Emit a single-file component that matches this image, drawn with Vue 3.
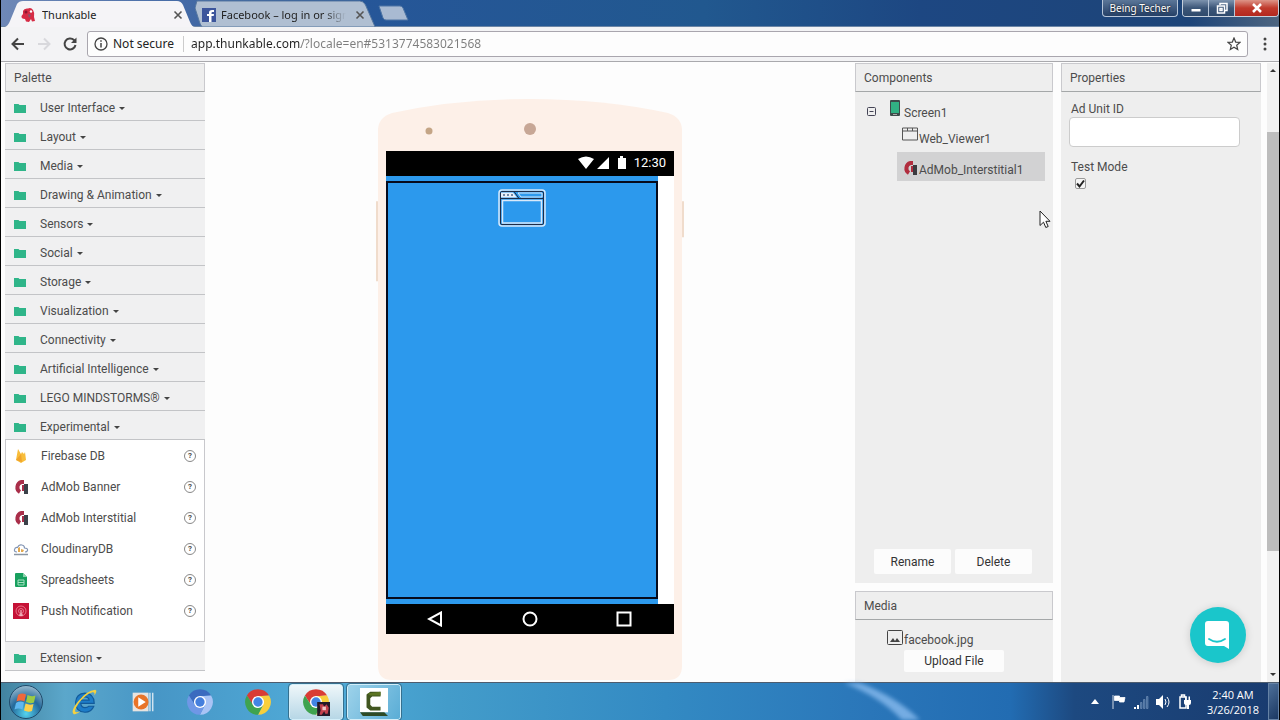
<script setup>
import { ref } from 'vue'

const categories = [
  'User Interface', 'Layout', 'Media', 'Drawing & Animation', 'Sensors', 'Social',
  'Storage', 'Visualization', 'Connectivity', 'Artificial Intelligence',
  'LEGO MINDSTORMS®', 'Experimental'
]
const items = [
  { name: 'Firebase DB', icon: 'firebase' },
  { name: 'AdMob Banner', icon: 'admob' },
  { name: 'AdMob Interstitial', icon: 'admob' },
  { name: 'CloudinaryDB', icon: 'cloud' },
  { name: 'Spreadsheets', icon: 'sheet' },
  { name: 'Push Notification', icon: 'push' }
]
const chromium = ['#3b6bbf', '#a9c3f5', '#6f97e6']
const chrome = ['#d93c35', '#f8cf3c', '#3fa34f']
const url = ref('app.thunkable.com/?locale=en#5313774583021568')
const adUnit = ref('')
const testMode = ref(true)
</script>

<template>
  <div class="window">
    <header class="titlebar">
      <div class="tab active">
        <svg class="tab-shape" viewBox="0 0 190 27" preserveAspectRatio="none"><path d="M0 27 Q3 26 5 21 L12 4 Q14 1 18 1 H172 Q176 1 178 5 L185 22 Q187 27 190 27Z" fill="#f5f4f7" /></svg>
        <svg class="fav" viewBox="0 0 16 16"><path d="M3 4Q4 1 8 1.500Q11 0 13 3Q15 6 14 10L15 14L12 14.500L11 12L9 15L6 14.500L5 12Q1 12 1.500 9L3 7Z" fill="#d62b45" /><circle cx="6" cy="5" r="1.500" fill="#8b1730" /><path d="M8 7l3 1-2 3z" fill="#7f5670" /><circle cx="11" cy="4.500" r="1.200" fill="#fff" /></svg>
        <button class="tab-title">Thunkable</button>
        <button class="close" aria-label="Close Thunkable"><svg viewBox="0 0 10 10"><path d="M1.500 1.500l7 7M8.500 1.500l-7 7" /></svg></button>
      </div>
      <div class="tab second">
        <svg class="tab-shape" viewBox="0 0 190 27" preserveAspectRatio="none"><path d="M2 1H172Q176 1 178 5L188 27H8Q6 26 5 23L0 8Z" fill="#b0bfd2" stroke="#56779f" /></svg>
        <svg class="fav" viewBox="0 0 16 16"><rect x="1" y="1" width="14" height="14" fill="#3c559c" /><path d="M8 15V9H6V7h2V5.500Q8 3 11 3h2v2h-1.500Q10.500 5 10.500 6v1H13l-.3 2h-2.200v6z" fill="#fff" /></svg>
        <button class="tab-title faded">Facebook – log in or sign</button>
        <button class="close" aria-label="Close Facebook"><svg viewBox="0 0 10 10"><path d="M1.500 1.500l7 7M8.500 1.500l-7 7" /></svg></button>
      </div>
      <button class="newtab" aria-label="New tab"><svg viewBox="0 0 32 16"><path d="M2 1H23Q25 1 26 3L31 15H9Q7 15 6 13Z" fill="#a9bad2" stroke="#4e75a5" /></svg></button>
      <div class="grow"></div>
      <button class="user">Being Techer</button>
      <div class="controls">
        <button aria-label="Minimize"><svg viewBox="0 0 12 12"><path d="M1.500 7h9v2.500h-9z" fill="#fff" /></svg></button>
        <button aria-label="Restore"><svg viewBox="0 0 12 12" fill="none" stroke="#fff" stroke-width="1.500"><path d="M4 3V1.500h7v7H9M1.500 4h7v7h-7zM4 6.500h2v2H4z" /></svg></button>
        <button class="x" aria-label="Close"><svg viewBox="0 0 12 12"><path d="M2 2l8 8M10 2l-8 8" stroke="#fff" stroke-width="2.500" /></svg></button>
      </div>
    </header>

    <nav class="toolbar">
      <button class="nav" aria-label="Back"><svg viewBox="0 0 16 16"><path d="M14 8H3M8 2.500L2.500 8 8 13.500" stroke="#444" /></svg></button>
      <button class="nav" aria-label="Forward"><svg viewBox="0 0 16 16"><path d="M2 8h11M8 2.500L13.500 8 8 13.500" stroke="#d8d8dc" /></svg></button>
      <button class="nav" aria-label="Reload"><svg viewBox="0 0 16 16"><path d="M13.500 9A5.500 5.500 0 1 1 12 4L13 5.500" stroke="#444" /><path d="M14.500 1.500v5.500H9z" fill="#444" /></svg></button>
      <div class="address">
        <button class="secure"><svg viewBox="0 0 14 14"><circle cx="7" cy="7" r="6" fill="none" stroke="#444" stroke-width="1.300" /><path d="M7 6v4.500M7 3.300v1.500" stroke="#444" stroke-width="1.500" /></svg>Not secure</button>
        <input class="url" v-model="url" aria-label="Address" />
        <button class="star" aria-label="Bookmark"><svg viewBox="0 0 14 14"><path d="M7 1l1.700 4.100 4.300.3-3.300 2.800 1 4.300L7 10.200 3.300 12.500l1-4.300L1 5.400l4.300-.3z" fill="none" stroke="#444" stroke-width="1.200" /></svg></button>
      </div>
      <button class="menu" aria-label="Menu"><svg viewBox="0 0 4 14"><circle cx="2" cy="2" r="1.500" /><circle cx="2" cy="7" r="1.500" /><circle cx="2" cy="12" r="1.500" /></svg></button>
    </nav>

    <main class="page">
      <aside class="palette">
        <h2 class="heading">Palette</h2>
        <button v-for="c in categories" :key="c" class="category">
          <svg class="folder" viewBox="0 0 12 10"><path d="M0 1h4.500l1 1H12v8H0z" /></svg>{{ c }}<i class="caret"></i>
        </button>
        <ul class="items">
          <li v-for="i in items" :key="i.name">
            <svg class="item-icon" viewBox="0 0 16 16">
              <template v-if="i.icon === 'firebase'"><path d="M3 12L5 1l3 5 1-2 2 2 1-2 1 8-5 3z" fill="#f8bd3a" /><path d="M3 12L8 6l1 8z" fill="#f0a32b" /></template>
              <template v-else-if="i.icon === 'admob'"><path d="M11 3H8.500A5.500 5.500 0 0 0 7 13" fill="none" stroke="#a92e49" stroke-width="4" /><path d="M9 6h2v6H9z" fill="#a92e49" /><path d="M11 5h4v10h-4z" fill="#3b4149" /></template>
              <template v-else-if="i.icon === 'cloud'"><path d="M4 11Q1 11 1.500 8.500 2 6 4.500 6.500 6 3 9 4q2.500.5 2.500 3Q15 7 14.500 9.500 14 11 12 11" fill="none" stroke="#8294b3" stroke-width="1.200" /><path d="M5 7l2-1v5H5zM8 8l3 1-1 2H8z" fill="#e2a84f" /><path d="M1 13.500h14" stroke="#8b96a3" stroke-width="1.500" /></template>
              <template v-else-if="i.icon === 'sheet'"><path d="M3 1h7l4 4v9q0 1-1 1H3q-1 0-1-1V2q0-1 1-1z" fill="#18a05e" /><path d="M10 1l4 4h-4z" fill="#8bd2ad" /><path d="M5 8h6v5H5zM5 10.500h6" fill="none" stroke="#a5dfc1" /></template>
              <template v-else><path d="M0 0h16v16H0z" fill="#c51236" /><circle cx="8" cy="8" r="5" fill="none" stroke="#f08c9c" stroke-width=".8" /><circle cx="8" cy="8" r="2.500" fill="none" stroke="#f08c9c" stroke-width=".8" /><path d="M8 7v6M6 12h4" stroke="#fbd5db" /></template>
            </svg>
            <span>{{ i.name }}</span>
            <button class="help" :aria-label="'About ' + i.name">?</button>
          </li>
        </ul>
        <button class="category">
          <svg class="folder" viewBox="0 0 12 10"><path d="M0 1h4.500l1 1H12v8H0z" /></svg>Extension<i class="caret"></i>
        </button>
      </aside>

      <section class="viewer">
        <div class="phone">
          <svg class="shell" viewBox="0 0 308 580" preserveAspectRatio="none">
            <path d="M1 102v80M307 102v36" stroke="#f0dccc" stroke-width="3" />
            <path d="M2 30Q3 18 16 14Q80 0 154 0Q228 0 292 14Q305 18 306 30V566Q306 580 292 580H16Q2 580 2 566Z" fill="#fdf0e8" />
            <circle cx="53" cy="32" r="3.500" fill="#c4a586" />
            <circle cx="154" cy="30" r="6" fill="#c7a796" />
          </svg>
          <div class="status">
            <svg viewBox="0 0 52 16"><path d="M1 4Q9-1 17 4L9 14zM20 14L32 2v12zM41 3h2V1h3v2h3v11h-8z" fill="#fff" /></svg>
            <span>12:30</span>
          </div>
          <div class="screen">
            <div class="canvas">
              <div class="webview">
                <svg viewBox="0 0 48 38" fill="none">
                  <rect x="1" y="1" width="46" height="36" rx="3" stroke="#d8e9fa" stroke-width="1.500" />
                  <rect x="2.500" y="2.500" width="43" height="33" rx="1.500" stroke="#1c2c48" />
                  <path d="M3 3.500h12l4 5H3z" fill="#e7eef8" />
                  <path d="M5 6h2M9 6h2M13 6h2" stroke="#51698b" stroke-width="1.500" />
                  <path d="M20 4h24v4H23z" stroke="#d8e9fa" />
                  <path d="M16 2.500l5 7M3 9.500h42" stroke="#1c2c48" />
                  <path d="M4.500 11.500h39v22.500h-39z" stroke="#d8e9fa" stroke-width="1.500" />
                </svg>
              </div>
            </div>
          </div>
          <div class="navbar">
            <svg viewBox="0 0 16 16"><path d="M14 1.500v13L2 8z" /></svg>
            <svg viewBox="0 0 16 16"><circle cx="8" cy="8" r="6.500" /></svg>
            <svg viewBox="0 0 16 16"><path d="M1.500 1.500h13v13h-13z" /></svg>
          </div>
        </div>
      </section>

      <div class="column components">
        <h2 class="heading">Components</h2>
        <section class="panel tree">
          <ul>
            <li class="root"><button class="collapse" aria-label="Collapse"><svg viewBox="0 0 9 9" fill="none" stroke="#445"><rect x=".5" y=".5" width="8" height="8" rx="1" /><path d="M2.500 4.500h4" /></svg></button>
              <svg class="mobile" viewBox="0 0 10 16"><rect width="10" height="16" rx="1" fill="#3e4c4a" /><path d="M1 2h8v11H1z" fill="#31b283" /><path d="M3 14.500h4" stroke="#aaa" /></svg><button class="node">Screen1</button></li>
            <li class="child"><svg class="web" viewBox="0 0 16 14" fill="none" stroke="#555"><path d="M.5.5h15v12H.5zM.5 3.500h15M5.500.5v3M10.500.5v3" /></svg><button class="node">Web_Viewer1</button></li>
            <li class="child selected"><svg class="web" viewBox="0 0 16 16"><path d="M11 3H8.500A5.500 5.500 0 0 0 7 13" fill="none" stroke="#b12d3e" stroke-width="4" /><path d="M9 6h2v6H9z" fill="#b12d3e" /><path d="M11 5h4v10h-4z" fill="#3b3b40" /></svg><button class="node">AdMob_Interstitial1</button></li>
          </ul>
          <div class="actions"><button class="btn">Rename</button><button class="btn">Delete</button></div>
        </section>
        <h2 class="heading">Media</h2>
        <section class="panel media">
          <a class="file" href="#"><svg viewBox="0 0 16 16" fill="none" stroke="#444"><rect x=".5" y=".5" width="15" height="14" rx="1" /><path d="M3 12l3-4 2 3 2-3 3 4z" fill="#444" stroke="none" /></svg>facebook.jpg</a>
          <button class="btn upload">Upload File</button>
        </section>
      </div>

      <div class="column properties">
        <h2 class="heading">Properties</h2>
        <section class="panel props">
          <label for="unit">Ad Unit ID</label>
          <input id="unit" type="text" v-model="adUnit" />
          <label for="test">Test Mode</label>
          <span class="check"><input id="test" type="checkbox" v-model="testMode" /><svg v-if="testMode" viewBox="0 0 11 11"><path d="M2 5.500l2.500 3L9 2.500" fill="none" stroke="#222" stroke-width="2" /></svg></span>
        </section>
      </div>

      <div class="scroll"><i class="up"></i><i class="thumb"></i><i class="down"></i></div>

      <button class="chat" aria-label="Open chat"><svg viewBox="0 0 28 30"><path d="M4 1h18q3 0 3 3v25l-5-3H4q-3 0-3-3V4q0-3 3-3z" fill="#fff" /><path d="M5 19q8 5.500 16 0" fill="none" stroke="#1ac6cb" stroke-width="1.800" stroke-linecap="round" /></svg></button>
      <svg class="cursor" viewBox="0 0 12 19"><path d="M1 1v14.500l3.500-3.300 2.300 5.300 2.400-1-2.300-5.200H11z" fill="#fff" stroke="#222" /></svg>
    </main>

    <footer class="taskbar">
      <svg class="streak" viewBox="0 0 100 38" preserveAspectRatio="none"><path d="M0 0H16Q52 14 76 38H58Q36 14 0 0Z" fill="#8fc0f2" /></svg>
      <button class="start" aria-label="Start">
        <svg viewBox="0 0 36 36"><defs><radialGradient id="orb" cx=".5" cy=".85" r=".9"><stop offset="0" stop-color="#54d3ee" /><stop offset=".5" stop-color="#24699b" /><stop offset="1" stop-color="#a9c5d5" /></radialGradient></defs><circle cx="18" cy="18" r="16.500" fill="url(#orb)" stroke="#1f4b6c" /><path d="M10 11q4-2.500 8-.5l-1.500 7q-4-2-8 0z" fill="#f0683b" /><path d="M19.500 11q4 2 8 .5l-1.500 7q-4 1.500-8-.5z" fill="#9bca45" /><path d="M8 19q4-2.500 8-.5l-1.500 7q-4-2-8 0z" fill="#5fb7f0" /><path d="M17.500 19.500q4 2 8 .5l-1.500 7q-4 1.500-8-.5z" fill="#fbd04b" /></svg>
      </button>
      <button class="task" aria-label="Internet Explorer"><svg viewBox="0 0 30 30"><path d="M26 16.500H11.500Q12 21 16 21q3 0 4-1.500h5.500Q23 26 16 26 6 25.500 6 15.500 6.500 6 16 5.500 26 6 26 16.500zM11.500 13h9Q20 9.500 16 9.500T11.500 13z" fill="#1d7cc8" stroke="#125a9a" stroke-width="1.200" /><path d="M4 28Q0 25 9 14 18 3 27 2q3 1-1 6 1-4-2-3.500Q16 7 9 17 3 26 7 26q2 0 4-1-4 4-7 3z" fill="#f5d13f" /></svg></button>
      <button class="task" aria-label="Media Player"><svg viewBox="0 0 30 30"><path d="M5 5h17v20H5z" fill="#e8e4e0" /><path d="M23.500 5v20M26.500 5v20" stroke="#d5e6f1" stroke-width="1.500" /><circle cx="14" cy="15" r="8" fill="#e87428" /><path d="M11 10l8 5-8 5z" fill="#fff" /></svg></button>
      <button class="task" aria-label="Chromium"><svg viewBox="0 0 24 24"><path v-for="(c, n) in chromium" :key="n" :transform="`rotate(${n * 120} 12 12)`" d="M2.470 6.500A11 11 0 0 1 21.530 6.500L12 7L7.670 14.500Z" :fill="c" /><circle cx="12" cy="12" r="5.200" fill="#fff" /><circle cx="12" cy="12" r="4" fill="#457fdd" /></svg></button>
      <button class="task" aria-label="Chrome"><svg viewBox="0 0 24 24"><path v-for="(c, n) in chrome" :key="n" :transform="`rotate(${n * 120} 12 12)`" d="M2.470 6.500A11 11 0 0 1 21.530 6.500L12 7L7.670 14.500Z" :fill="c" /><circle cx="12" cy="12" r="5.200" fill="#fff" /><circle cx="12" cy="12" r="4" fill="#4285e4" /></svg></button>
      <button class="task open front" aria-label="Thunkable - Chrome"><svg viewBox="0 0 24 24"><path v-for="(c, n) in chrome" :key="n" :transform="`rotate(${n * 120} 12 12)`" d="M2.470 6.500A11 11 0 0 1 21.530 6.500L12 7L7.670 14.500Z" :fill="c" /><circle cx="12" cy="12" r="5.200" fill="#fff" /><circle cx="12" cy="12" r="4" fill="#4285e4" /><path d="M13 12h11v12H13z" fill="#241828" /><path d="M15 14h3l1 2 2-2 2 3-1 5h-2l-1-2-2 3h-2l1-4z" fill="#c4404c" /><path d="M17.500 16h3v3h-3z" fill="#f0c9c8" /></svg></button>
      <button class="task open" aria-label="Camtasia"><svg viewBox="0 0 30 30"><path d="M0 0h30v26H0z" fill="#fff" /><path d="M0 26h26l4 4H3z" fill="#2e4a25" /><path d="M22 4v5h-9l-2 2v7l2 2h9v4H11l-4-3V7l4-3z" fill="#41561f" /><path d="M22 4v4H11L8 6z" fill="#5b7422" /></svg></button>
      <div class="grow"></div>
      <div class="tray">
        <svg class="arrow" viewBox="0 0 8 5"><path d="M0 5l4-5 4 5z" /></svg>
        <svg viewBox="0 0 16 16"><path d="M2 1v14M3.500 2h5v1.500H14L13 8H8.500V6.500h-5z" stroke="#fff" stroke-width=".8" /></svg>
        <svg viewBox="0 0 16 16"><path d="M1 13h2v2H1zM4 11h2v4H4z" /><path d="M7.500 8.500h1.500v6H7.500zM10.500 5.500H12v9h-1.500zM13.500 2.500H15v12h-1.500z" fill="#41699a" stroke="#86a3c5" stroke-width=".5" /></svg>
        <svg viewBox="0 0 16 16"><path d="M1 5h3l4-4v14l-4-4H1z" /><path d="M10 5q2 3 0 6M12 3q4 5 0 10" fill="none" stroke="#fff" /></svg>
        <svg viewBox="0 0 16 16"><path d="M3 3h6v11H3zM4.500 1h3v2h-3z" fill="none" stroke="#fff" stroke-width="1.500" /><path d="M7 6h7v3q0 2-2 2v4h-2v-4q-3 0-3-2zM8 2.500h1.500V6H8zM11.500 2.500H13V6h-1.500z" /></svg>
        <div class="clock"><span>2:40 AM</span><span>3/26/2018</span></div>
      </div>
      <button class="peek" aria-label="Show desktop"></button>
    </footer>
  </div>
</template>

<style>
html, body { margin: 0; background: #000; }
</style>

<style scoped>
* { box-sizing: border-box; }
button, input { font: inherit; color: inherit; margin: 0; padding: 0; border: 0; background: none; }
ul { list-style: none; margin: 0; padding: 0; }
svg { display: block; flex: none; }
.grow { flex: 1; }
.window { height: 100vh; display: flex; flex-direction: column; overflow: hidden; padding: 0 1px; font: 12px/16px Roboto, sans-serif; color: #4c4c4c; }

.titlebar { display: flex; height: 27px; flex: none; padding-left: 4px; background: linear-gradient(90deg, #6f88b7 0, #27569a 24%, #21588f 55%, #1d4782 72%, #1d4478 93%, #4d6580 100%); font: 11px/16px "Noto Sans", sans-serif; color: #222; border-bottom: 1px solid #6c86a6; }
.tab { position: relative; display: flex; align-items: center; height: 27px; width: 190px; flex: none; padding: 2px 11px 0 15px; }
.tab.active { z-index: 1; }
.tab.second { width: 182px; padding: 2px 11px 0 6px; }
.tab-shape { position: absolute; inset: 0; width: 100%; height: 100%; }
.fav { position: relative; width: 16px; height: 16px; margin-right: 6px; }
.second .fav { margin-right: 4px; }
.tab-title { position: relative; flex: 1; min-width: 0; overflow: hidden; white-space: nowrap; text-align: left; }
.faded { -webkit-mask-image: linear-gradient(90deg, #000 82%, transparent); mask-image: linear-gradient(90deg, #000 82%, transparent); }
.close { position: relative; width: 12px; height: 12px; margin-left: 8px; }
.close svg { width: 10px; height: 10px; margin: auto; fill: none; stroke: #555; stroke-width: 1.6px; }
.newtab { align-self: center; width: 32px; height: 16px; }
.user { height: 17px; width: 76px; font-size: 10px; line-height: 15px; color: #fff; text-shadow: 0 0 2px #000; border: 1px solid #b6c5d8; border-top: 0; border-radius: 0 0 4px 4px; background: linear-gradient(#5b7698, #243f66); margin-right: 4px; white-space: nowrap; }
.controls { display: flex; height: 17px; border: 1px solid #c6d0dc; border-top: 0; border-radius: 0 0 4px 4px; overflow: hidden; }
.controls button { width: 26px; border-right: 1px solid #b6c5d8; background: linear-gradient(#7d93ae, #3c5678 50%, #2f4a6c); }
.controls button.x { width: 43px; border: 0; background: linear-gradient(#dd9588, #c03a2c 50%, #b3281f); }
.controls svg { width: 12px; height: 12px; margin: auto; }

.toolbar { display: flex; align-items: center; height: 35px; flex: none; padding: 0 8px; background: #f3f3f5; border-bottom: 1px solid #a9a9ad; font: 12px/16px "Noto Sans", sans-serif; color: #222; }
.nav { width: 18px; height: 18px; margin-right: 8px; }
.nav svg { width: 16px; height: 16px; fill: none; stroke-width: 2px; margin: auto; }
.address { flex: 1; display: flex; align-items: center; height: 26px; border: 1px solid #a9a6ae; border-radius: 3px; background: #fdfdfd; padding: 0 6px; }
.secure { display: flex; align-items: center; gap: 5px; white-space: nowrap; padding-right: 9px; border-right: 1px solid #ccc; }
.secure svg, .star svg { width: 14px; height: 14px; }
.url { flex: 1; min-width: 0; padding-left: 7px; outline: 0; background: linear-gradient(90deg, #222 117px, #7d7d7d 117px); background-clip: text; -webkit-background-clip: text; color: transparent; }
.menu { width: 4px; margin: 0 4px 0 15px; }
.menu svg { width: 4px; height: 14px; fill: #444; }

.page { position: relative; flex: 1; min-height: 0; display: flex; padding: 1px 0 0 4px; background: #fdfdfd; overflow: hidden; }
.heading { margin: 0; flex: none; height: 29px; padding: 0 8px; font: 12px/28px Roboto, sans-serif; background: #eee; border: 1px solid #c9c9cd; border-bottom-color: #a4a7a8; }
.palette { width: 200px; flex: none; }
.category { display: flex; align-items: center; width: 100%; height: 29px; padding: 4px 8px 0 9px; background: #f0f0f1; border-bottom: 1px solid #c3c4c7; text-align: left; }
.folder { width: 12px; height: 10px; fill: #2fb589; margin-right: 14px; }
.caret { border: 3px solid transparent; border-top-color: #444; border-bottom: 0; margin-left: 4px; }
.items { height: 202px; border: 1px solid #c8c8cc; border-top: 0; background: #fff; }
.items li { display: flex; align-items: center; height: 31px; padding: 0 8px 0 7px; }
.item-icon { width: 16px; height: 16px; margin-right: 12px; }
.items span { flex: 1; }
.help { width: 12px; height: 12px; border: 1px solid #888; border-radius: 50%; font-size: 8px; line-height: 10px; font-weight: 700; }

.viewer { flex: 1; display: flex; justify-content: center; padding: 36px 0 2px; }
.phone { position: relative; width: 308px; display: flex; flex-direction: column; padding: 52px 10px 46px; }
.shell { position: absolute; inset: 0; width: 100%; height: 100%; }
.status { position: relative; height: 25px; flex: none; background: #000; color: #fff; font-size: 13px; display: flex; align-items: center; justify-content: flex-end; gap: 5px; padding: 0 8px 2px; }
.status svg { width: 52px; height: 16px; }
.screen { position: relative; flex: 1; display: flex; background: #fff; padding-right: 16px; }
.canvas { flex: 1; display: flex; padding: 5px 0; background: #2c99ed; }
.webview { flex: 1; border: 2px solid #060b1c; display: flex; justify-content: center; padding-top: 6px; }
.webview svg { width: 48px; height: 38px; }
.navbar { position: relative; height: 30px; flex: none; background: #000; display: flex; justify-content: space-between; align-items: center; padding: 0 42px 0 41px; }
.navbar svg { width: 16px; height: 16px; fill: none; stroke: #fff; stroke-width: 2px; }

.column { display: flex; flex-direction: column; flex: none; margin-right: 8px; }
.components { width: 198px; }
.properties { width: 200px; margin-right: 6px; }
.panel { background: #eee; }
.tree { flex: 1; display: flex; flex-direction: column; justify-content: space-between; margin-bottom: 8px; padding: 8px 10px 9px 12px; }
.tree ul { margin-right: -2px; }
.tree li { display: flex; align-items: center; }
.root { height: 23px; }
.collapse { width: 9px; height: 9px; margin-right: 14px; }
.collapse svg { width: 9px; height: 9px; }
.mobile { width: 10px; height: 16px; margin-right: 4px; align-self: flex-start; }
.child { height: 29px; margin-left: 30px; padding-left: 5px; }
.web { width: 16px; height: 15px; margin-right: 1px; align-self: flex-start; margin-top: 4px; }
.node { padding-top: 2px; white-space: nowrap; }
.selected { background: #d2d2d3; }
.selected .web { margin-top: 8px; height: 16px; }
.selected .node { padding-top: 6px; }
.actions { display: flex; justify-content: center; gap: 4px; margin-left: -4px; }
.btn { width: 77px; height: 25px; background: #fcfcfc; border-radius: 2px; color: #333; }
.media { height: 62px; padding-left: 32px; padding-top: 8px; }
.file { display: flex; align-items: center; gap: 1px; height: 22px; color: inherit; text-decoration: none; padding-top: 2px; }
.file svg { width: 16px; height: 16px; margin-top: -5px; }
.btn.upload { display: block; width: 100px; height: 22px; margin-left: 17px; }
.props { flex: 1; padding: 9px 10px; display: flex; flex-direction: column; align-items: flex-start; }
#unit { width: 171px; height: 30px; margin: 0 0 12px -2px; padding: 0 6px; background: #fff; border: 1px solid #ccc; border-radius: 4px; }
.check { position: relative; width: 11px; height: 11px; margin: 3px 0 0 4px; }
#test { appearance: none; display: block; width: 11px; height: 11px; background: #f5f5f5; border: 1px solid #999; border-radius: 2px; }
.check svg { position: absolute; inset: 0; width: 11px; height: 11px; pointer-events: none; }
.scroll { width: 12px; flex: none; background: #f1f1f1; display: flex; flex-direction: column; align-items: center; padding: 6px 0; }
.up { border: 3px solid transparent; border-bottom-color: #333; border-top: 0; }
.thumb { width: 100%; height: 419px; margin: 60px 0 auto; background: #bdbdbd; }
.down { border: 3px solid transparent; border-top-color: #333; border-bottom: 0; }
.chat { position: absolute; right: 33px; bottom: 19px; width: 56px; height: 56px; border-radius: 50%; background: #1ac6cb; box-shadow: 0 1px 8px rgba(0, 0, 0, .15); }
.chat svg { width: 28px; height: 30px; margin: auto; }
.cursor { position: absolute; right: 228px; top: 148px; width: 12px; height: 19px; }

.taskbar { position: relative; height: 38px; flex: none; display: flex; align-items: center; border-top: 1px solid #4d5c6e; padding-left: 7px; background: linear-gradient(90deg, #42839f 0, #5ba7cb 5%, #4796c6 12%, #50abd8 25%, #439cca 35%, #338ac3 52%, #2a76b9 68%, #226cb2 79%, #1d4980 84%, #193b6f 100%); }
.streak { position: absolute; left: 66%; top: 0; width: 100px; height: 100%; opacity: .75; filter: blur(2px); }
.start { width: 36px; height: 36px; margin-right: 13px; }
.start svg { width: 36px; height: 36px; }
.task { width: 54px; height: 36px; margin-right: 4px; }
.task svg { width: 28px; height: 28px; margin: auto; }
.task.open { border: 1px solid #d2eef9; border-radius: 3px; outline: 1px solid #35708f; outline-offset: 0; background: linear-gradient(120deg, #9dd2ea, #5aadd6); }
.task.open.front { background: linear-gradient(#eff7fa, #b7d7e6); }
.tray { display: flex; align-items: center; gap: 6px; color: #fff; }
.tray svg { width: 16px; height: 16px; fill: #fff; }
.tray .arrow { width: 8px; height: 5px; margin-right: 6px; }
.clock { display: flex; flex-direction: column; align-items: center; font: 11px/15px "Open Sans", sans-serif; margin: 0 9px 0 8px; }
.peek { width: 11px; height: 100%; border: 1px solid #6582a5; background: linear-gradient(135deg, #4d6f99, #1b3862); }
</style>
